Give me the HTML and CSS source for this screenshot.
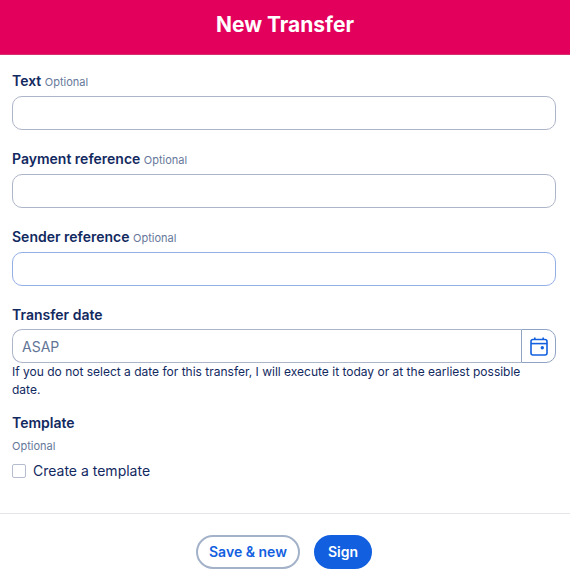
FILE: index.html
```html
<!DOCTYPE html>
<html lang="en">
<head>
<meta charset="utf-8">
<meta name="viewport" content="width=device-width, initial-scale=1">
<title>New Transfer</title>
<link rel="stylesheet" href="styles.css">
</head>
<body>
<header class="header"><h1>New Transfer</h1></header>
<form class="form">
  <main class="fields">
    <div class="field">
      <label class="label" for="text">Text <span class="optional">Optional</span></label>
      <input class="input" id="text" type="text">
    </div>
    <div class="field">
      <label class="label" for="payment">Payment reference <span class="optional">Optional</span></label>
      <input class="input" id="payment" type="text">
    </div>
    <div class="field">
      <label class="label" for="sender">Sender reference <span class="optional">Optional</span></label>
      <input class="input input-active" id="sender" type="text">
    </div>
    <div class="field field-date">
      <label class="label" for="date">Transfer date</label>
      <div class="date-row">
        <input class="input date-input" id="date" type="text" placeholder="ASAP" aria-describedby="date-hint">
        <button class="date-button" type="button" aria-label="Choose date">
          <svg viewBox="0 0 18 19" width="18" height="19" fill="none" stroke="currentColor" stroke-width="1.6">
            <rect x="1" y="2.5" width="16" height="15.5" rx="2"/>
            <path d="M1 6.6h16"/>
            <path d="M4.8 .6v2.4M13.2 .6v2.4"/>
            <circle cx="12.3" cy="10.8" r="1.7" fill="currentColor" stroke="none"/>
          </svg>
        </button>
      </div>
      <p class="hint" id="date-hint">If you do not select a date for this transfer, I will execute it today or at the earliest possible date.</p>
    </div>
    <fieldset class="template">
      <legend class="label">Template</legend>
      <span class="optional">Optional</span>
      <label class="check"><input class="checkbox" type="checkbox">Create a template</label>
    </fieldset>
  </main>
  <footer class="actions">
    <button class="button button-outline" type="button">Save &amp; new</button>
    <button class="button button-primary" type="submit">Sign</button>
  </footer>
</form>
</body>
</html>
```
FILE: styles.css
```css
* {
  box-sizing: border-box;
}

body {
  margin: 0;
  background: #fff;
  color: #12295f;
  font: 12px/18px Inter, "Liberation Sans", sans-serif;
}

.header {
  padding: 9px 16px 14px;
  border-bottom: 1px solid #d4306f;
  background: #e3005d;
  color: #fff;
  text-align: center;
}

.header h1 {
  margin: 0;
  font-size: 21px;
  line-height: 31px;
  font-weight: 700;
}

.fields {
  padding: 16px 14px 32px 12px;
}

.field {
  display: flex;
  flex-direction: column;
  margin-bottom: 19px;
}

.field-date {
  margin-bottom: 14px;
}

.label {
  padding: 0;
  margin-bottom: 4px;
  font-size: 14px;
  line-height: 20px;
  font-weight: 600;
}

.optional {
  color: #66789a;
  font-size: 11px;
  font-weight: 400;
}

.input {
  width: 100%;
  height: 34px;
  padding: 0 9px;
  border: 1px solid #adb5c8;
  border-radius: 10px;
  background: #fff;
  color: inherit;
  font: 14px/20px Inter, "Liberation Sans", sans-serif;
  outline: 0;
}

.input::placeholder {
  color: #627596;
  opacity: 1;
}

.input-active {
  border-color: #94afe6;
}

.date-row {
  display: flex;
}

.date-input {
  flex: 1;
  min-width: 0;
  border-right: 0;
  border-radius: 10px 0 0 10px;
}

.date-button {
  display: grid;
  place-items: center;
  width: 35px;
  height: 34px;
  padding: 0;
  border: 1px solid #8fa3c2;
  border-radius: 0 10px 10px 0;
  background: #fff;
  color: #1260df;
}

.hint {
  margin: 0;
  padding-right: 16px;
}

.template {
  display: flex;
  flex-direction: column;
  min-width: 0;
  margin: 0;
  padding: 0;
  border: 0;
}

.check {
  display: flex;
  align-items: center;
  gap: 7px;
  margin-top: 6px;
  font-size: 14px;
  line-height: 20px;
}

.checkbox {
  appearance: none;
  width: 14px;
  height: 14px;
  margin: 0;
  border: 1px solid #b4bccd;
  border-radius: 2px;
}

.actions {
  display: flex;
  justify-content: center;
  gap: 14px;
  padding: 21px 14px 13px 12px;
  border-top: 1px solid #e4e5e8;
}

.button {
  height: 34px;
  padding: 0 12px;
  border: 2px solid #1260df;
  border-radius: 17px;
  font: 600 14px/20px Inter, "Liberation Sans", sans-serif;
}

.button-outline {
  padding: 0 11px;
  border-color: #a3b2c9;
  background: #fff;
  color: #1260df;
}

.button-primary {
  background: #1260df;
  color: #fff;
}
```
